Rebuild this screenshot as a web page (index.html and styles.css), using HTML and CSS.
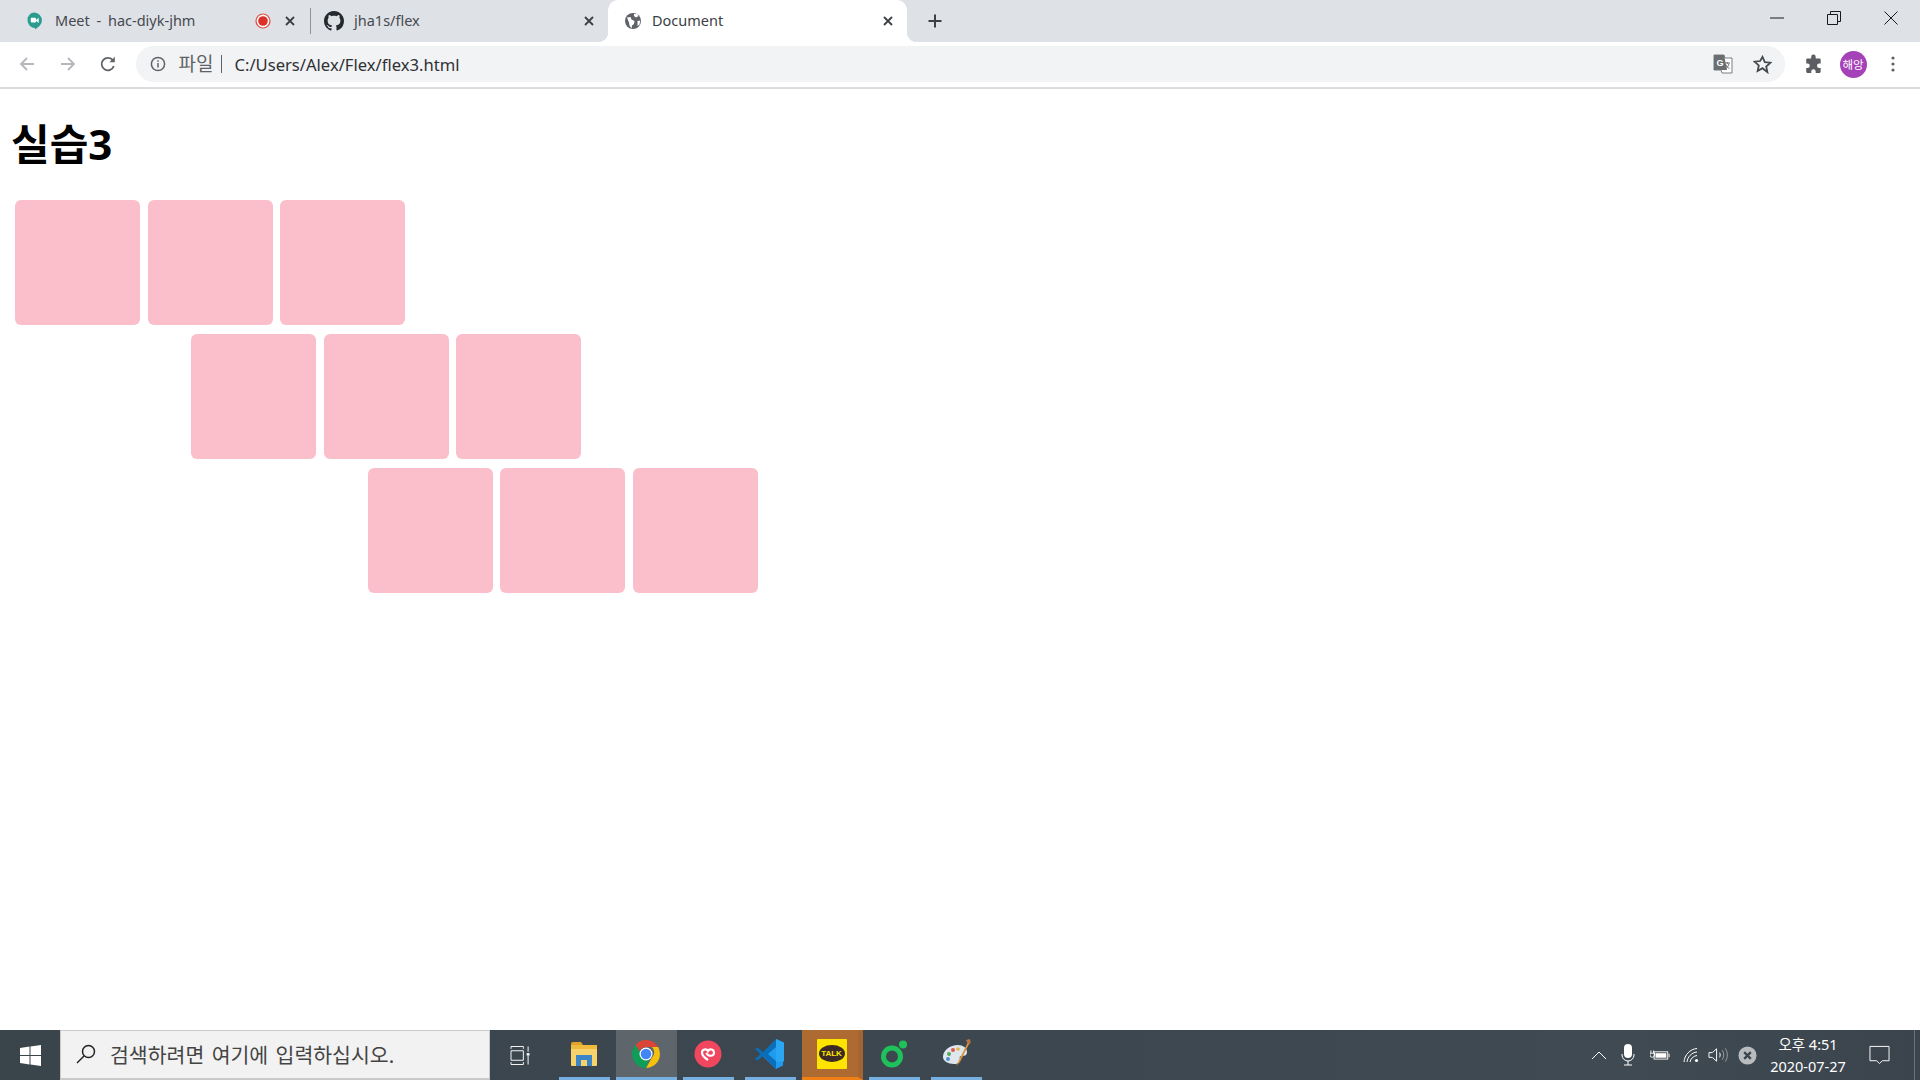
FILE: index.html
```html
<!DOCTYPE html>
<html lang="ko">

<head>
    <meta charset="UTF-8">
    <meta name="viewport" content="width=device-width, initial-scale=1.0">
    <title>Document</title>
    <link rel="stylesheet" href="styles.css">
</head>

<body>
    <div class="tabstrip">
        <div class="tab tab-meet">
            <svg class="tab-icon" viewBox="1.500 0.500 16 17">
                <path d="M9 1a7.500 7.500 0 0 1 7 7.500c0 4-3.500 6.200-6.500 8.500v-1.500a7 7 0 0 1-7-7A6.500 6.500 0 0 1 9 1z" fill="#2a9d8f" />
                <rect x="5.500" y="6" width="5" height="4.500" rx="1" fill="#fff" />
                <path d="M10.500 8l2.500-2v5l-2.500-2z" fill="#fff" />
            </svg>
            <span class="tab-title">Meet - hac-diyk-jhm</span>
            <svg class="tab-record" viewBox="0 0 16 16">
                <circle cx="8" cy="8" r="7" fill="#fff" stroke="#e04a3f" stroke-width="1.200" />
                <circle cx="8" cy="8" r="4.800" fill="#dc3028" />
            </svg>
            <svg class="tab-close" viewBox="0 0 12 12"><path d="M2 2l8 8M10 2l-8 8" /></svg>
        </div>
        <div class="tab tab-github">
            <svg class="tab-icon-lg" viewBox="0 0 16 16">
                <path fill="#24292e" d="M8 0C3.580 0 0 3.580 0 8c0 3.540 2.290 6.530 5.470 7.590.4.070.55-.17.55-.38 0-.19-.01-.82-.01-1.490-2.010.37-2.530-.49-2.690-.94-.09-.23-.48-.94-.82-1.130-.28-.15-.68-.52-.01-.53.63-.01 1.080.58 1.230.82.72 1.210 1.870.87 2.330.66.07-.52.28-.87.51-1.070-1.780-.2-3.640-.89-3.640-3.950 0-.87.31-1.590.82-2.150-.08-.2-.36-1.020.08-2.120 0 0 .67-.21 2.200.82.64-.18 1.320-.27 2-.27.68 0 1.360.09 2 .27 1.530-1.040 2.200-.82 2.200-.82.44 1.100.16 1.920.08 2.120.51.56.82 1.270.82 2.150 0 3.070-1.870 3.750-3.650 3.950.29.25.54.73.54 1.480 0 1.070-.01 1.930-.01 2.200 0 .21.15.46.55.38A8.013 8.013 0 0 0 16 8c0-4.420-3.580-8-8-8z" />
            </svg>
            <span class="tab-title">jha1s/flex</span>
            <svg class="tab-close" viewBox="0 0 12 12"><path d="M2 2l8 8M10 2l-8 8" /></svg>
        </div>
        <div class="tab tab-active">
            <svg class="tab-icon" viewBox="0 0 18 18">
                <circle cx="9" cy="9" r="8" fill="#5f6368" />
                <path d="M3 5.500l3.500-.5 1 2.500 3 1.500-.5 3-2 1.500-.5 3-2-3-.5-3zM10 2l3-.2 1.500 2.200-2.500 1.500-2-1.500zM13.500 9l2.800-.5-.8 4-2 1.500z" fill="#fff" />
            </svg>
            <span class="tab-title">Document</span>
            <svg class="tab-close" viewBox="0 0 12 12"><path d="M2 2l8 8M10 2l-8 8" /></svg>
        </div>
        <svg class="new-tab" viewBox="0 0 16 16"><path d="M8 1.500v13M1.500 8h13" /></svg>
        <div class="window-btns">
            <svg viewBox="0 0 14 14"><path d="M0 7h14" /></svg>
            <svg viewBox="0 0 14 14"><path d="M.5 3.500h10v10H.5zM3.500 3.500V.5h10v10h-3" /></svg>
            <svg viewBox="0 0 14 14"><path d="M.5.500l13 13M13.500.500l-13 13" /></svg>
        </div>
    </div>

    <div class="toolbar">
        <svg class="nav-icon nav-off" viewBox="0 0 18 18"><path d="M16 9H3M9 3L3 9l6 6" /></svg>
        <svg class="nav-icon nav-off" viewBox="0 0 18 18"><path d="M2 9h13M9 3l6 6-6 6" /></svg>
        <svg class="nav-icon" viewBox="0 0 18 18"><path d="M14.800 11a6.200 6.200 0 1 1-.9-5.600" /><path class="solid" d="M15.800 1.800v5.400h-5.400z" /></svg>
        <div class="omnibox">
            <svg class="info-icon" viewBox="0 0 16 16">
                <circle cx="8" cy="8" r="6.600" />
                <path d="M8 7v4.500M8 4.200v1.600" />
            </svg>
            <span class="scheme">파일</span>
            <span class="url">C:/Users/Alex/Flex/flex3.html</span>
            <svg class="translate-icon" viewBox="0 0 20 20">
                <path d="M1 1h10l1 3h7v15H9l-1-3H1z" fill="#fff" stroke="#7a7d80" />
                <path d="M1 1h10l3 15H1z" fill="#6b6e71" />
                <text x="3.500" y="11.500" class="translate-g">G</text>
                <path d="M12 9h5M14.500 8v1.500M16 9.500c-.6 3-2 4.500-3.500 5M13 10.500c.6 2 2 3.500 3.500 4" fill="none" stroke="#6b6e71" />
            </svg>
            <svg class="star-icon" viewBox="0 0 18 18"><path d="M9 1.800l2.200 4.900 5.300.6-4 3.600 1.100 5.300L9 12.500l-4.600 2.700 1.100-5.300-4-3.600 5.300-.6z" /></svg>
        </div>
        <svg class="puzzle-icon" viewBox="0 0 18 18"><path d="M6.500 2.500a2 2 0 0 1 4 0V4h3.500a1 1 0 0 1 1 1v3.500h-1.300a2 2 0 0 0 0 4H15V16a1 1 0 0 1-1 1h-3.500v-1.200a2 2 0 0 0-4 0V17H3a1 1 0 0 1-1-1v-3.500h1.200a2 2 0 0 0 0-4H2V5a1 1 0 0 1 1-1h3.500z" /></svg>
        <div class="avatar">해앙</div>
        <svg class="menu-icon" viewBox="0 0 4 16"><circle cx="2" cy="2" r="1.600" /><circle cx="2" cy="8" r="1.600" /><circle cx="2" cy="14" r="1.600" /></svg>
    </div>

    <main class="page">
        <h1>실습3</h1>
        <div class="box-row">
            <div class="box"></div>
            <div class="box"></div>
            <div class="box"></div>
        </div>
        <div class="box-row row-2">
            <div class="box"></div>
            <div class="box"></div>
            <div class="box"></div>
        </div>
        <div class="box-row row-3">
            <div class="box"></div>
            <div class="box"></div>
            <div class="box"></div>
        </div>
    </main>

    <footer class="taskbar">
        <div class="start-btn">
            <svg viewBox="0 0 21 21"><path fill="#fff" d="M0 3l9.500-1.400v8.300H0zM10.500 1.500L21 0v9.900H10.500zM0 11h9.500v8.400L0 18zM10.500 11H21v10l-10.500-1.500z" /></svg>
        </div>
        <div class="search-box">
            <svg viewBox="0 0 20 20"><circle cx="12.500" cy="7.500" r="6" /><path d="M8 12l-7 7" /></svg>
            <span>검색하려면 여기에 입력하십시오.</span>
        </div>
        <div class="task-view">
            <svg viewBox="0 0 22 20"><path d="M1 .5h13M1 19.500h13M1 5h13v10H1zM1 3V.5M14 3V.5M1 19.500V17M14 19.500V17M19 .5v5.500M19 10v9.500" /><rect x="17.500" y="7.500" width="3" height="2.500" fill="#fff" stroke="none" /></svg>
        </div>
        <div class="app-list">
            <div class="app app-open app-explorer">
                <svg viewBox="0 0 28 26">
                    <path d="M1 3a2 2 0 0 1 2-2h8l2 3h-12z" fill="#e0a526" />
                    <path d="M1 4h26v20a1 1 0 0 1-1 1H2a1 1 0 0 1-1-1z" fill="#f8d26a" />
                    <path d="M1 4h26v4H1z" fill="#eebb3d" />
                    <path d="M6 25V14h16v11h-5v-6h-6v6z" fill="#3a86c8" />
                </svg>
            </div>
            <div class="app app-open app-chrome">
                <svg viewBox="0 0 28 28">
                    <path d="M14 0a14 14 0 0 1 12.100 7H14a7 7 0 0 0-6.400 4.200L3.600 4.800A14 14 0 0 1 14 0z" fill="#db4437" />
                    <path d="M26.100 7A14 14 0 0 1 14 28l6-10.500A7 7 0 0 0 19.900 7z" fill="#f4c20d" />
                    <path d="M3.600 4.800l6 10.400a5 5 0 0 0 8 2.500L14 28A14 14 0 0 1 3.600 4.800z" fill="#0f9d58" />
                    <circle cx="14" cy="14" r="6.500" fill="#fff" />
                    <circle cx="14" cy="14" r="5.300" fill="#4285f4" />
                </svg>
            </div>
            <div class="app app-open app-heart">
                <svg viewBox="0 0 28 28">
                    <circle cx="14" cy="14" r="13.500" fill="#f0475f" />
                    <path d="M14 20c-3-2-6-4.300-6-7.300a3.200 3.200 0 0 1 6-1.600 3.200 3.200 0 0 1 6 1.600c0 3-3.500 3.800-6 2.300-1-.6-1.400-1.500-1.400-2.300" fill="none" stroke="#fff" stroke-width="2.200" />
                </svg>
            </div>
            <div class="app app-open app-code">
                <svg viewBox="0 0 30 32">
                    <path d="M22 1l7 3.500v23L22 31 9 18.500l13-10z" fill="#1f9cf0" />
                    <path d="M22 1L9 14 3.500 9.500 1 11l5.500 5L1 21l2.500 1.500 5.500-4.500 13 13v-8l-8-7 8-7z" fill="#0a6fb8" />
                    <path d="M22 8.500v15l8-.1V4.500L22 1z" fill="#2aa6f2" />
                </svg>
            </div>
            <div class="app app-kakao">
                <div class="kakao-tile">
                    <div class="kakao-bubble">TALK</div>
                </div>
            </div>
            <div class="app app-open app-ring">
                <svg viewBox="0 0 28 28">
                    <circle cx="12" cy="16.500" r="8.500" fill="none" stroke="#1fc25a" stroke-width="5" />
                    <circle cx="23" cy="4.500" r="4" fill="#1fc25a" />
                </svg>
            </div>
            <div class="app app-open app-paint">
                <svg viewBox="0 0 30 30">
                    <path d="M2 18c0-7 7-12 15-12 5 0 9 3 9 7 0 3-2 4-5 4-2 0-3 1-2 3 1 3-2 5-6 5-6 0-11-3-11-7z" fill="#dfe7ee" />
                    <circle cx="8" cy="15" r="2" fill="#57a85a" />
                    <circle cx="12" cy="11" r="2" fill="#e0574f" />
                    <circle cx="17" cy="10" r="1.800" fill="#e6b73d" />
                    <circle cx="7" cy="20" r="2" fill="#4f8fd1" />
                    <path d="M28 1l-11 22-2 4 1-1 3-3L29.500 2z" fill="#d8933c" />
                    <path d="M25 1l4-1 .5 5-3-1z" fill="#b9744a" />
                </svg>
            </div>
        </div>
        <div class="tray">
            <svg class="tray-chevron" viewBox="0 0 16 10"><path d="M1 9l7-7 7 7" /></svg>
            <svg class="tray-mic" viewBox="0 0 14 22">
                <rect x="3" y="0" width="8" height="14" rx="4" fill="#fff" stroke="none" />
                <path d="M1 10v1a6 6 0 0 0 12 0v-1M7 17v4M3 21h8" />
            </svg>
            <svg class="tray-battery" viewBox="0 0 22 14">
                <path d="M1 2v3M4 2v3M0 5h5v2a2.500 2.500 0 0 1-5 0z" />
                <rect x="4.500" y="3.500" width="15" height="8" />
                <rect x="6" y="5" width="12" height="5" fill="#fff" stroke="none" />
                <path d="M21 5.500v4" />
            </svg>
            <svg class="tray-wifi" viewBox="0 0 16 16">
                <path d="M1 15C1.500 8 7 2 14 1.500M4 15c.5-5 4.500-9.500 10-10M7 15c.5-3 3-6 7-6.500" />
                <circle cx="13.500" cy="13.500" r="1.600" fill="#fff" stroke="none" />
            </svg>
            <svg class="tray-volume" viewBox="0 0 22 16">
                <path d="M1 5.500h3.500L9 1.500v13l-4.500-4H1z" />
                <path d="M12 5.500c1 1.500 1 3.500 0 5" />
                <path class="faint" d="M15 3c2 3 2 7 0 10M18 1c3 4 3 10 0 14" />
            </svg>
            <svg class="tray-error" viewBox="0 0 20 20">
                <circle cx="10" cy="10" r="9.500" fill="#b9bcbe" stroke="none" />
                <path d="M6.500 6.500l7 7M13.500 6.500l-7 7" />
            </svg>
            <div class="clock">
                <div>오후 4:51</div>
                <div>2020-07-27</div>
            </div>
            <svg class="tray-notify" viewBox="0 0 22 20"><path d="M1 1h20v15h-7l-3 3-3-3H1z" /></svg>
            <div class="show-desktop"></div>
        </div>
    </footer>
</body>

</html>
```

FILE: styles.css
```css
* {
    box-sizing: border-box;
}

html,
body {
    height: 100%;
}

body {
    margin: 0;
    display: flex;
    flex-direction: column;
    height: 100vh;
    overflow: hidden;
    background-color: #fff;
    font-family: "Noto Sans", "Noto Sans CJK KR", sans-serif;
    color: #000;
}

svg {
    display: block;
    flex: none;
}

/* tab strip */
.tabstrip {
    display: flex;
    align-items: stretch;
    height: 42px;
    padding-left: 12px;
    background-color: #dee1e6;
    flex: none;
}

.tab {
    position: relative;
    display: flex;
    align-items: center;
    width: 298px;
    font-size: 14.500px;
    color: #45494e;
}

.tab-meet {
    padding: 0 14px;
}

.tab-meet .tab-title {
    word-spacing: 3px;
}

.tab-github {
    padding: 0 13px 0 14px;
}

.tab-github::before {
    content: "";
    position: absolute;
    left: 0;
    top: 8px;
    bottom: 8px;
    width: 1px;
    background-color: #8f9296;
}

.tab-active {
    width: 299px;
    padding: 0 13px 0 16px;
    background-color: #fff;
    border-radius: 10px 10px 0 0;
    color: #3c4043;
}

.tab-active::before,
.tab-active::after {
    content: "";
    position: absolute;
    bottom: 0;
    width: 10px;
    height: 10px;
}

.tab-active::before {
    left: -10px;
    background: radial-gradient(circle at 0 0, #dee1e6 10px, #fff 10.500px);
}

.tab-active::after {
    right: -10px;
    background: radial-gradient(circle at 100% 0, #dee1e6 10px, #fff 10.500px);
}

.tab-icon {
    width: 18px;
    height: 18px;
    margin-right: 11px;
}

.tab-active .tab-icon {
    margin-right: 10px;
}

.tab-icon-lg {
    width: 20px;
    height: 20px;
    margin-right: 10px;
}

.tab-title {
    flex: 1;
    padding-bottom: 2px;
    white-space: nowrap;
}

.tab-record {
    width: 16px;
    height: 16px;
    margin-right: 13px;
}

.tab-close {
    width: 12px;
    height: 12px;
}

.tab-close path {
    fill: none;
    stroke: #3c4043;
    stroke-width: 1.800;
}

.new-tab {
    width: 16px;
    height: 16px;
    margin: 13px 0 0 20px;
    fill: none;
    stroke: #3c4043;
    stroke-width: 2;
}

.window-btns {
    display: flex;
    align-items: center;
    gap: 43px;
    margin-left: auto;
    padding: 0 22px 6px 0;
}

.window-btns svg {
    width: 14px;
    height: 14px;
    fill: none;
    stroke: #1a1a1a;
    stroke-width: 1;
}

/* toolbar */
.toolbar {
    display: flex;
    align-items: center;
    height: 47px;
    padding: 4px 0 5px 18px;
    background-color: #fff;
    border-bottom: 2px solid #dadce0;
    flex: none;
}

.nav-icon {
    width: 18px;
    height: 18px;
    margin-right: 22.500px;
    fill: none;
    stroke: #5f6368;
    stroke-width: 1.800;
}

.nav-icon .solid {
    fill: #5f6368;
    stroke: none;
}

.nav-off {
    stroke: #b4b7bb;
}

.omnibox {
    display: flex;
    align-items: center;
    width: 1649px;
    height: 36px;
    margin-left: -4px;
    padding: 0 13px 0 14px;
    border-radius: 18px;
    background-color: #f1f3f4;
    font-size: 16.600px;
}

.info-icon {
    width: 16px;
    height: 16px;
    margin-right: 13px;
    fill: none;
    stroke: #5f6368;
    stroke-width: 1.500;
}

.scheme {
    padding-right: 8px;
    margin-right: 12px;
    border-right: 1px solid #5f6368;
    color: #5f6368;
    font-size: 19px;
    line-height: 18px;
}

.url {
    flex: 1;
    color: #303134;
    white-space: nowrap;
}

.translate-icon {
    width: 20px;
    height: 20px;
    margin-right: 20px;
}

.translate-g {
    font-family: "Liberation Sans", sans-serif;
    font-size: 9px;
    font-weight: bold;
    fill: #fff;
}

.star-icon {
    width: 19px;
    height: 19px;
    fill: none;
    stroke: #45494d;
    stroke-width: 1.700;
}

.puzzle-icon {
    width: 20px;
    height: 20px;
    margin-left: 19px;
    fill: #5a5d61;
}

.avatar {
    width: 27px;
    height: 27px;
    margin-left: 16px;
    border-radius: 50%;
    background-color: #a642b8;
    color: #fff;
    font-size: 11.500px;
    line-height: 27px;
    text-align: center;
    white-space: nowrap;
}

.menu-icon {
    width: 4px;
    height: 16px;
    margin-left: 24px;
    fill: #5f6368;
}

/* page content */
.page {
    flex: 1;
    padding: 31px 0 0 15px;
}

h1 {
    margin: 0 0 32px -4px;
    font-size: 42px;
    line-height: 48px;
    font-weight: bold;
}

.box-row {
    display: flex;
    gap: 7.670px;
    margin-bottom: 9px;
}

.row-2 {
    padding-left: 176px;
}

.row-3 {
    padding-left: 352.800px;
}

.box {
    width: 125px;
    height: 125px;
    border-radius: 6px;
    background-color: #fbbfcc;
}

/* taskbar */
.taskbar {
    display: flex;
    align-items: stretch;
    height: 50px;
    background: linear-gradient(90deg, #3a444b, #3d4750 50%, #3f4a52 85%, #3b444c);
    flex: none;
}

.start-btn {
    display: flex;
    align-items: center;
    justify-content: center;
    width: 60px;
}

.start-btn svg {
    width: 21px;
    height: 21px;
}

.search-box {
    display: flex;
    align-items: center;
    width: 430px;
    padding: 0 0 2px 15px;
    background-color: #f2f2f2;
    border: 1px solid #c9c9c9;
    border-bottom-width: 2px;
    color: #444;
    font-size: 20.500px;
    word-spacing: 2px;
    white-space: nowrap;
}

.search-box svg {
    width: 20px;
    height: 20px;
    margin-right: 14px;
    fill: none;
    stroke: #222;
    stroke-width: 1.500;
}

.task-view {
    display: flex;
    align-items: center;
    width: 69px;
    padding-left: 20px;
}

.task-view svg {
    width: 21px;
    height: 19px;
    fill: none;
    stroke: #fff;
    stroke-width: 1;
}

.app-list {
    display: flex;
}

.app {
    display: flex;
    align-items: center;
    justify-content: center;
    width: 51px;
    margin-right: 10px;
    padding: 0 2px 3px 0;
}

.app-open {
    border-bottom: 3px solid #76b0e0;
    padding-bottom: 0;
}

.app svg {
    width: 28px;
    height: 28px;
}

.app-chrome {
    width: 61px;
    margin-left: -4px;
    margin-right: 6px;
    background-color: #5e666c;
}

.app-heart {
    margin-right: 11px;
}

.app-code {
    margin-right: 6px;
    padding-right: 3px;
}

.app-code svg {
    width: 30px;
    height: 32px;
}

.app-kakao {
    width: 61px;
    margin-right: 6px;
    border-bottom: 3px solid #f07f16;
    border-right: 5px solid #a56530;
    padding: 0;
    background-color: #ad6b32;
}

.kakao-tile {
    display: flex;
    align-items: center;
    justify-content: center;
    width: 30px;
    height: 30px;
    margin-left: 3px;
    border-radius: 1px;
    background-color: #fde500;
}

.kakao-bubble {
    width: 26px;
    height: 17px;
    border-radius: 50%;
    background-color: #3b2b24;
    color: #fde500;
    font-family: "Liberation Sans", sans-serif;
    font-size: 8px;
    font-weight: bold;
    line-height: 17px;
    text-align: center;
}

.app-ring {
    margin-right: 11px;
}

.app-paint svg {
    width: 30px;
    height: 30px;
}

.tray {
    display: flex;
    align-items: center;
    margin-left: auto;
    color: #fff;
}

.tray svg {
    fill: none;
    stroke: #fff;
    stroke-width: 1;
}

.tray-chevron {
    width: 16px;
    height: 10px;
    margin-right: 14px;
}

.tray-mic {
    width: 14px;
    height: 22px;
    margin-right: 15px;
}

.tray-battery {
    width: 20px;
    height: 14px;
    margin-right: 12.800px;
}

.tray-wifi {
    width: 16px;
    height: 16px;
    margin-right: 9.500px;
}

.tray-volume {
    width: 21px;
    height: 16px;
    margin-right: 9px;
}

.tray-volume .faint {
    stroke: #9aa0a5;
}

.tray-error {
    width: 19px;
    height: 19px;
    margin-right: 10px;
}

.tray .tray-error path {
    stroke: #3c454d;
    stroke-width: 2.400;
}

.clock {
    width: 82px;
    font-size: 14.500px;
    line-height: 22px;
    text-align: center;
    white-space: nowrap;
}

.tray-notify {
    width: 21px;
    height: 20px;
    margin-left: 20px;
}

.show-desktop {
    width: 1px;
    height: 50px;
    margin-left: 24px;
    margin-right: 5px;
    background-color: #6a7278;
}
```
